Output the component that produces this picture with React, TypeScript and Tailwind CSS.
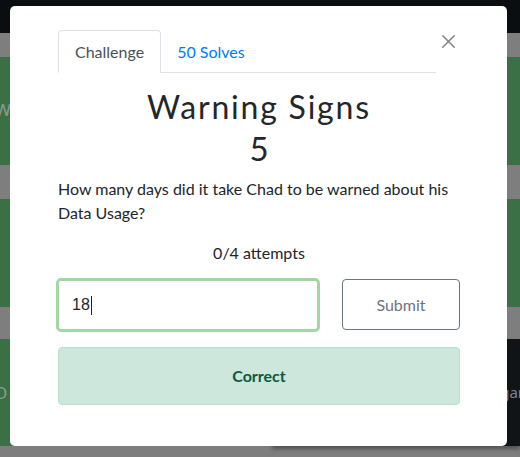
import { X } from "lucide-react";

const font = { fontFamily: "Lato, 'Noto Sans', sans-serif" };

function Backdrop() {
  return (
    <div className="flex h-[457px] w-[520px] flex-col bg-[#7e7e7e]">
      <div className="h-[33px] bg-[#0b0e11]" />
      <div className="h-[24px]" />
      <div className="flex h-[108px] items-center bg-[#3b7047] pb-[2px] text-[17px] text-[#8c9c90]">
        <span className="-ml-[5px]">W</span>
      </div>
      <div className="h-[34px]" />
      <div className="h-[108px] bg-[#3b7047]" />
      <div className="h-[32px]" />
      <div className="flex h-[107px]">
        <div className="flex w-[248px] items-center bg-[#3b7047] text-[17px] text-[#8c9c90]">
          <span className="-ml-[6px]">O</span>
        </div>
        <div className="w-[24px]" />
        <div className="flex flex-1 items-center justify-end overflow-hidden bg-[#111417] text-[15px] text-[#7b8694] shadow-[0_3px_4px_rgba(0,0,0,0.35)]">
          <span className="-mr-[4px]">gar</span>
        </div>
      </div>
    </div>
  );
}

function ChallengeModal() {
  return (
    <div
      className="absolute left-[10px] top-[6px] h-[440px] w-[497px] rounded-[5px] bg-white pl-[48px] pr-[47px] pt-[24px] text-[#212529]"
      style={font}
    >
      {/* Tabs + close */}
      <div className="flex items-start">
        <div className="flex flex-1 border-b border-[#dee2e6]">
          <div className="-mb-px rounded-t-[4px] border border-b-white border-[#dee2e6] bg-white px-[16px] pb-[7px] pt-[9px] text-[16px] leading-[24px] text-[#495057]">
            Challenge
          </div>
          <div className="px-[16px] pb-[8px] pt-[10px] text-[16px] leading-[24px] text-[#007bff]">
            50 Solves
          </div>
        </div>
        <button className="flex w-[24px] justify-end text-[#888]">
          <X size={23} strokeWidth={1.7} />
        </button>
      </div>

      <h2 className="mt-[15px] text-center text-[32px] font-normal leading-[38px] tracking-[1.8px] text-[#23272b]">
        Warning Signs
      </h2>
      <h3 className="mt-[2px] text-center text-[33px] font-normal leading-[40px] text-[#23272b]">
        5
      </h3>

      <p className="mt-[9px] text-[16px] leading-[24px] text-[#212529]">
        How many days did it take Chad to be warned about his Data Usage?
      </p>

      <p className="mt-[16px] text-center text-[16px] leading-[24px] text-[#212529]">
        0/4 attempts
      </p>

      <div className="mt-[13px] flex items-start justify-between">
        <div
          className="-ml-[2px] flex h-[54px] w-[264px] items-center rounded-[5px] border-[3px] border-[#a2d6a4] pl-[13px] text-[16px] text-[#212529]"
          style={{ fontFamily: "'Liberation Sans', Arial, sans-serif" }}
        >
          18
          <span className="ml-px h-[19px] w-px bg-[#212529]" />
        </div>
        <button className="mt-[1px] h-[51px] w-[118px] rounded-[4px] border border-[#6c757d] text-[16px] text-[#6c757d]">
          Submit
        </button>
      </div>

      <div className="mt-[15px] flex h-[58px] items-center justify-center rounded-[4px] border border-[#b6dfcd] bg-[#cde7dd] text-[16px] font-bold text-[#0b5a39]">
        Correct
      </div>
    </div>
  );
}

export default function App() {
  return (
    <div className="relative h-[457px] w-[520px] overflow-hidden">
      <Backdrop />
      <ChallengeModal />
    </div>
  );
}
